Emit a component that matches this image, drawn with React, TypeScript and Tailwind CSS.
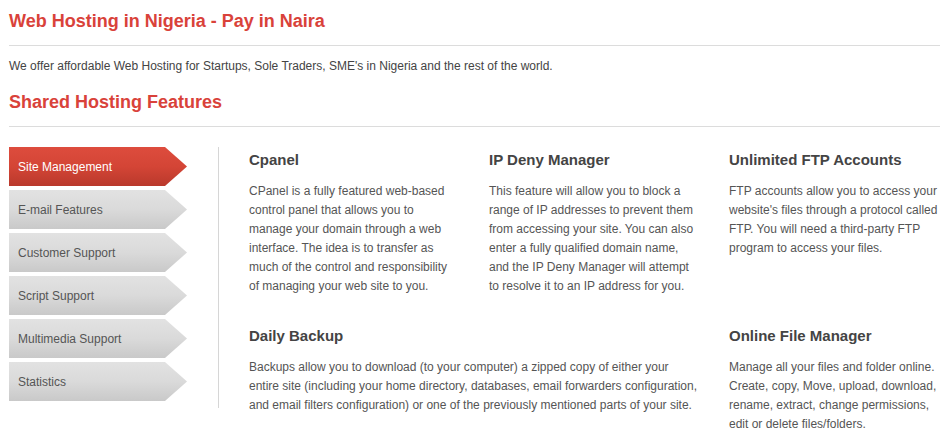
import React from "react";

const tabs = [
  "Site Management",
  "E-mail Features",
  "Customer Support",
  "Script Support",
  "Multimedia Support",
  "Statistics",
];

function Feature({ title, children, className = "" }: { title: string; children: React.ReactNode; className?: string }) {
  return (
    <div className={className}>
      <h3 className="text-[15px] font-bold text-[#444] leading-[18px]">{title}</h3>
      <p className="mt-[13px] text-[12px] leading-[19px] text-[#555]">{children}</p>
    </div>
  );
}

export default function App() {
  return (
    <div className="w-[949px] h-[440px] bg-white overflow-hidden px-[9px] pt-[10px]" style={{ fontFamily: '"Liberation Sans", Arial, sans-serif' }}>
      <h1 className="text-[18px] font-bold text-[#d9423a] leading-[22px]">Web Hosting in Nigeria - Pay in Naira</h1>
      <div className="mt-[13px] h-px bg-[#dcdcdc]" />
      <p className="mt-[13px] text-[12px] leading-[15px] text-[#444]">
        We offer affordable Web Hosting for Startups, Sole Traders, SME's in Nigeria and the rest of the world.
      </p>
      <h2 className="mt-[17px] text-[18px] font-bold text-[#d9423a] leading-[22px]">Shared Hosting Features</h2>
      <div className="mt-[13px] h-px bg-[#dcdcdc]" />
      <div className="mt-[20px] flex">
        <div className="w-[210px] border-r border-[#d6d6d6] h-[261px] flex flex-col gap-[4px]">
          {tabs.map((t, i) => (
            <div
              key={t}
              className={
                "w-[178px] h-[39px] flex items-center pl-[9px] text-[12px] [clip-path:polygon(0_0,calc(100%-22px)_0,100%_50%,calc(100%-22px)_100%,0_100%)] " +
                (i === 0
                  ? "bg-linear-to-b from-[#dd4c3d] via-[#d44536] to-[#b9392c] text-white"
                  : "bg-linear-to-b from-[#e2e2e2] via-[#dadada] to-[#c9c9c9] text-[#555]")
              }
            >
              {t}
            </div>
          ))}
        </div>
        <div className="pl-[30px] pt-[4px] flex-1">
          <div className="grid grid-cols-[240px_240px_1fr]">
            <Feature title="Cpanel">
              CPanel is a fully featured web-based<br />control panel that allows you to<br />manage your domain through a web<br />interface. The idea is to transfer as<br />much of the control and responsibility<br />of managing your web site to you.
            </Feature>
            <Feature title="IP Deny Manager">
              This feature will allow you to block a<br />range of IP addresses to prevent them<br />from accessing your site. You can also<br />enter a fully qualified domain name,<br />and the IP Deny Manager will attempt<br />to resolve it to an IP address for you.
            </Feature>
            <Feature title="Unlimited FTP Accounts">
              FTP accounts allow you to access your<br />website's files through a protocol called<br />FTP. You will need a third-party FTP<br />program to access your files.
            </Feature>
          </div>
          <div className="mt-[31px] grid grid-cols-[240px_240px_1fr]">
            <Feature title="Daily Backup" className="col-span-2">
              Backups allow you to download (to your computer) a zipped copy of either your<br />entire site (including your home directory, databases, email forwarders configuration,<br />and email filters configuration) or one of the previously mentioned parts of your site.
            </Feature>
            <Feature title="Online File Manager">
              Manage all your files and folder online.<br />Create, copy, Move, upload, download,<br />rename, extract, change permissions,<br />edit or delete files/folders.
            </Feature>
          </div>
        </div>
      </div>
    </div>
  );
}
